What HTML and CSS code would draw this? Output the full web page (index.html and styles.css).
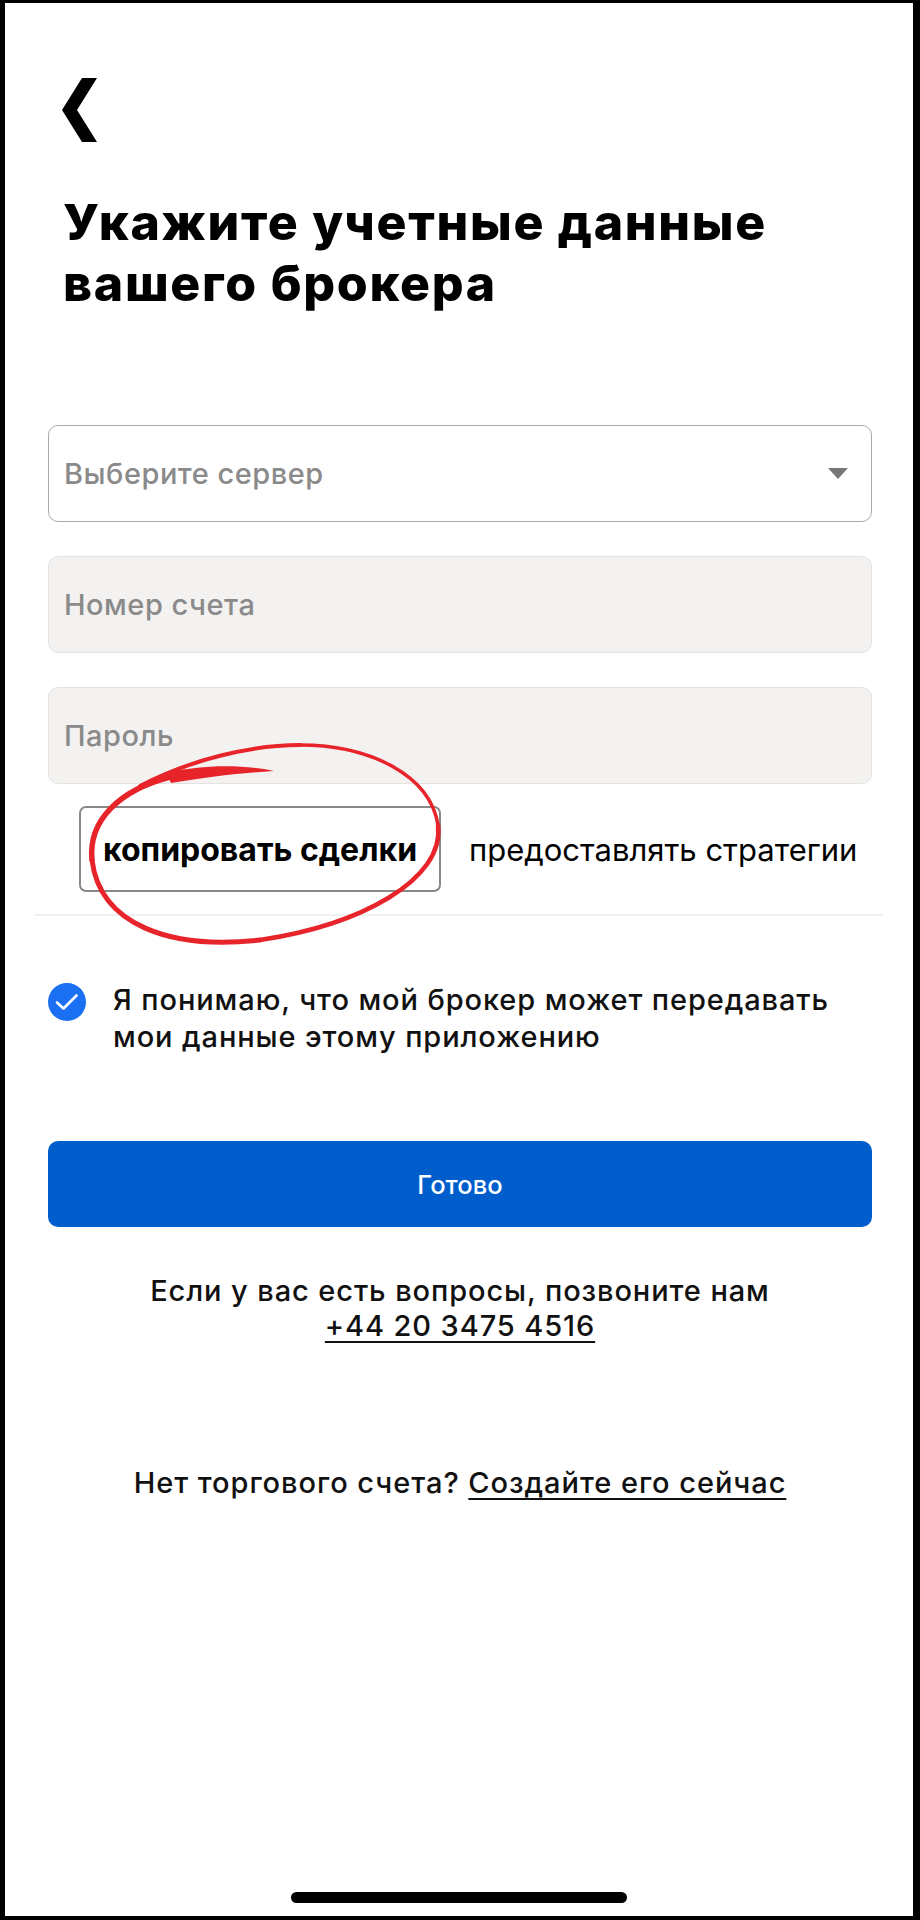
FILE: index.html
```html
<!DOCTYPE html>
<html lang="ru">
  <head>
    <meta charset="UTF-8" />
    <meta name="viewport" content="width=device-width, initial-scale=1.0" />
    <link rel="stylesheet" href="styles.css">
  </head>
  <body>
    <div class="screen">

      <div class="back">
        <svg width="40" height="64" viewBox="60 78 40 64">
          <polygon points="82,78 97,78 77,110 97,142 82,142 62,110" fill="#000" />
        </svg>
      </div>

      <h1 class="title">Укажите учетные данные вашего брокера</h1>

      <div class="form">
        <div class="field select">
          <span class="placeholder">Выберите сервер</span>
          <span class="caret"></span>
        </div>
        <div class="field filled">
          <span class="placeholder">Номер счета</span>
        </div>
        <div class="field filled">
          <span class="placeholder">Пароль</span>
        </div>

        <div class="mode">
          <div class="mode-item active">копировать сделки</div>
          <div class="mode-item">предоставлять стратегии</div>
        </div>
        <div class="divider"></div>

        <div class="agree">
          <span class="check">
            <svg width="38" height="38" viewBox="0 0 38 38">
              <circle cx="19" cy="19" r="19" fill="#1a6ff2" />
              <polyline points="9,19.5 15.5,25.5 28.5,12.5" fill="none" stroke="#fff" stroke-width="2.6" stroke-linecap="round" stroke-linejoin="round" />
            </svg>
          </span>
          <p>Я понимаю, что мой брокер может передавать мои данные этому приложению</p>
        </div>

        <button class="done">Готово</button>

        <p class="help">Если у вас есть вопросы, позвоните нам<br><a href="#">+44 20 3475 4516</a></p>

        <p class="signup">Нет торгового счета? <a href="#">Создайте его сейчас</a></p>
      </div>

      <div class="home-bar"></div>

      <!-- red hand drawn mark over the first option -->
      <svg class="mark" width="380" height="215" viewBox="70 735 380 215">
        <g fill="none" stroke="#e8242b" stroke-linecap="round">
          <path d="M 140 786 C 190 760, 250 745, 300 745" stroke-width="4" />
          <path d="M 300 745 C 370 745, 430 775, 438 825" stroke-width="3.5" />
          <path d="M 438 825 C 445 880, 360 925, 260 940" stroke-width="4.5" />
          <path d="M 260 940 C 170 950, 100 925, 92 860" stroke-width="5" />
          <path d="M 92 860 C 88 820, 120 790, 170 777" stroke-width="5.5" />
        </g>
        <path d="M 166 773 C 200 765, 240 764, 274 771 C 240 773, 200 778, 171 783 Z" fill="#e8242b" />
      </svg>
    </div>
  </body>
</html>
```

FILE: styles.css
```css
body {
  margin: 0;
  padding: 0;
  background-color: #fff;
  font-family: Inter, "Noto Sans", sans-serif;
  color: #111;
}

.screen {
  position: relative;
  display: flex;
  flex-direction: column;
  width: 920px;
  height: 1920px;
  box-sizing: border-box;
  border-style: solid;
  border-color: #000;
  border-width: 3px 7px 4px 5px;
  background-color: #fff;
}

.back {
  margin: 75px 0 0 55px;
  height: 64px;
}

.back svg {
  display: block;
}

.title {
  margin: 50px 40px 0 58px;
  font-size: 50px;
  line-height: 61px;
  font-weight: 800;
  letter-spacing: 1.7px;
  color: #000;
}

.form {
  display: flex;
  flex-direction: column;
  width: 824px;
  margin: 111px 0 0 43px;
}

.field {
  display: flex;
  align-items: center;
  height: 97px;
  box-sizing: border-box;
  padding: 0 15px;
  border-radius: 10px;
  margin-bottom: 34px;
}

.field:nth-child(3) {
  margin-bottom: 0;
}

.select {
  border: 1.5px solid #aaa;
  justify-content: space-between;
}

.filled {
  background-color: #f3f2f1;
  border: 1px solid #e4e3e2;
}

.placeholder {
  font-size: 29px;
  font-weight: 500;
  letter-spacing: 0.5px;
  color: #8a8a8a;
}

.caret {
  width: 0;
  height: 0;
  margin-right: 8px;
  border-left: 10px solid transparent;
  border-right: 10px solid transparent;
  border-top: 11px solid #777;
}

.mode {
  display: flex;
  align-items: center;
  margin: 22px 0 0 31px;
  gap: 28px;
}

.mode-item {
  font-size: 31px;
  white-space: nowrap;
  color: #000;
}

.mode-item.active {
  display: flex;
  align-items: center;
  justify-content: center;
  width: 362px;
  height: 86px;
  box-sizing: border-box;
  border: 2px solid #888;
  border-radius: 7px;
  font-size: 32px;
  font-weight: 700;
}

.divider {
  height: 2px;
  margin: 22px -11px 0 -13px;
  background-color: #f0f0f0;
}

.agree {
  display: flex;
  align-items: flex-start;
  gap: 27px;
  margin-top: 65px;
}

.check {
  flex: none;
  margin-top: 2px;
}

.check svg {
  display: block;
}

.agree p {
  max-width: 745px;
  margin: 0;
  font-size: 29px;
  line-height: 37px;
  font-weight: 500;
  letter-spacing: 0.9px;
}

.done {
  height: 86px;
  margin-top: 86px;
  border: none;
  border-radius: 10px;
  background-color: #005dcc;
  color: #fff;
  font-family: inherit;
  font-size: 25.5px;
  font-weight: 500;
}

.help {
  margin: 46px 0 0;
  text-align: center;
  font-size: 29px;
  line-height: 35px;
  font-weight: 500;
  letter-spacing: 0.9px;
}

.help a,
.signup a {
  color: #111;
  text-decoration: underline;
  text-decoration-thickness: 2px;
  text-underline-offset: 5px;
}

.signup {
  margin: 122px 0 0;
  text-align: center;
  font-size: 29px;
  line-height: 35px;
  font-weight: 500;
  letter-spacing: 0.95px;
}

.home-bar {
  width: 336px;
  height: 11px;
  margin: auto auto 13px;
  border-radius: 6px;
  background-color: #000;
}

.mark {
  position: absolute;
  left: 65px;
  top: 732px;
}
```
